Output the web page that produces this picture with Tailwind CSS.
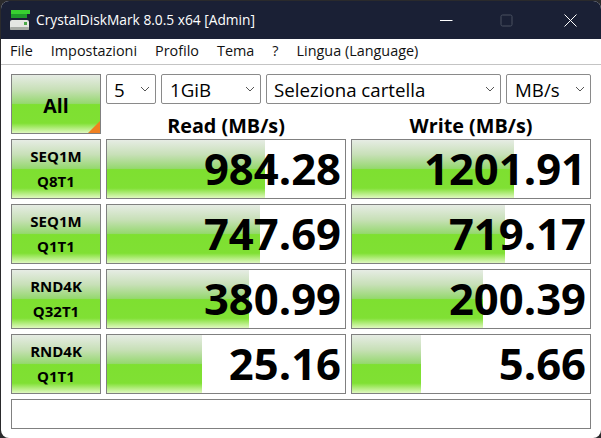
<!DOCTYPE html>
<html lang="it">
<head>
  <meta charset="UTF-8">
  <title>CrystalDiskMark 8.0.5 x64 [Admin]</title>
  <script src="https://cdn.jsdelivr.net/npm/@tailwindcss/browser@4"></script>
</head>
<body class="w-[601px] h-[438px] overflow-hidden bg-[#2a2a2c] font-['Open_Sans','Noto_Sans',sans-serif] text-black">
  <div class="w-[600px] h-[437px] mt-[1px] ml-[1px] rounded-[8px] overflow-hidden bg-white flex flex-col">

    <!-- title bar -->
    <div class="h-[38px] shrink-0 bg-[#1a2035] flex items-center text-white">
      <svg class="ml-[9px] w-[20px] h-[20px]" viewBox="0 0 20 20">
        <rect x="1" y="0" width="19" height="4" fill="#38d030"/>
        <rect x="1" y="4" width="16" height="4" fill="#1f9a2a"/>
        <rect x="0" y="10" width="19" height="10" rx="2" fill="#e4e6e2"/>
        <rect x="0" y="17" width="19" height="3" rx="1" fill="#a6aaa4"/>
        <rect x="14" y="12" width="3" height="3" fill="#4aa848"/>
      </svg>
      <span class="ml-[6px] text-[13.75px] leading-none whitespace-nowrap">CrystalDiskMark 8.0.5 x64 [Admin]</span>
      <svg class="ml-auto mr-[47px] w-[13px] h-[13px]" viewBox="0 0 13 13"><path d="M0 6.5h12.5" stroke="#fff" stroke-width="1"/></svg>
      <svg class="mr-[51px] w-[13px] h-[13px]" viewBox="0 0 13 13"><rect x="1" y="1" width="11" height="11" rx="1.5" fill="none" stroke="#4a5060" stroke-width="1"/></svg>
      <svg class="mr-[24px] w-[13px] h-[13px]" viewBox="0 0 13 13"><path d="M.5.5l12 12M12.5.5l-12 12" stroke="#fff" stroke-width="1"/></svg>
    </div>

    <!-- menu bar -->
    <div class="h-[26px] shrink-0 flex items-center pl-[9px] gap-[18px] text-[14.4px] leading-none border-b border-[#c4c4c4] text-[#111]">
      <span>File</span><span>Impostazioni</span><span>Profilo</span><span>Tema</span><span>?</span><span>Lingua (Language)</span>
    </div>

    <!-- main grid -->
    <div class="pl-[10px] pt-[9px] grid grid-cols-[90px_240px_240px] gap-[5px]">
      <div class="relative h-[60px] border border-[#808080] bg-[linear-gradient(#e6ece4_0%,#c8e0b8_25%,#96d870_49%,#7ee030_51%,#80e034_83%,#e0f8c0_100%)] flex items-center justify-center font-bold text-[19.5px] pt-[3px]">
        All
        <span class="absolute right-0 bottom-0 w-0 h-0 border-l-[12px] border-l-transparent border-b-[12px] border-b-[#f08020]"></span>
      </div>
      <div class="col-span-2 h-[60px] flex flex-col">
        <div class="flex gap-[5px] h-[30px] text-[18.7px]">
          <div class="w-[50px] rounded-[2px] border border-[#8a8a8a] flex items-center pl-[7px] pt-[3px]">5<svg class="ml-auto mr-[5px] mb-[3px] w-[10px] h-[6px]" viewBox="0 0 10 6"><path d="M1 1l4 4 4-4" fill="none" stroke="#555"/></svg></div>
          <div class="w-[100px] rounded-[2px] border border-[#8a8a8a] flex items-center pl-[8px] pt-[3px]">1GiB<svg class="ml-auto mr-[5px] mb-[3px] w-[10px] h-[6px]" viewBox="0 0 10 6"><path d="M1 1l4 4 4-4" fill="none" stroke="#555"/></svg></div>
          <div class="w-[235px] rounded-[2px] border border-[#8a8a8a] flex items-center pl-[7px] pt-[3px]">Seleziona cartella<svg class="ml-auto mr-[5px] mb-[3px] w-[10px] h-[6px]" viewBox="0 0 10 6"><path d="M1 1l4 4 4-4" fill="none" stroke="#555"/></svg></div>
          <div class="w-[85px] rounded-[2px] border border-[#8a8a8a] flex items-center pl-[8px] pt-[3px]">MB/s<svg class="ml-auto mr-[5px] mb-[3px] w-[10px] h-[6px]" viewBox="0 0 10 6"><path d="M1 1l4 4 4-4" fill="none" stroke="#555"/></svg></div>
        </div>
        <div class="flex gap-[5px] h-[30px] items-center font-bold text-[19.8px] leading-none pt-[13px]">
          <div class="w-[240px] text-center">Read (MB/s)</div>
          <div class="w-[240px] text-center">Write (MB/s)</div>
        </div>
      </div>

      <!-- SEQ1M Q8T1 -->
      <div class="h-[60px] border border-[#808080] bg-[linear-gradient(#e6ece4_0%,#c8e0b8_25%,#96d870_49%,#7ee030_51%,#80e034_83%,#e0f8c0_100%)] flex flex-col items-center justify-center font-bold text-[15px] leading-[25px]"><span>SEQ1M</span><span>Q8T1</span></div>
      <div class="relative h-[60px] border border-[#808080] flex items-center justify-end pr-[4px] font-bold text-[43.6px]"><span class="absolute left-0 inset-y-0 w-[158px] bg-[linear-gradient(#e6ece4_0%,#c8e0b8_25%,#96d870_49%,#7ee030_51%,#80e034_83%,#e0f8c0_100%)]"></span><span class="relative">984.28</span></div>
      <div class="relative h-[60px] border border-[#808080] flex items-center justify-end pr-[4px] font-bold text-[43.6px]"><span class="absolute left-0 inset-y-0 w-[162px] bg-[linear-gradient(#e6ece4_0%,#c8e0b8_25%,#96d870_49%,#7ee030_51%,#80e034_83%,#e0f8c0_100%)]"></span><span class="relative">1201.91</span></div>

      <!-- SEQ1M Q1T1 -->
      <div class="h-[60px] border border-[#808080] bg-[linear-gradient(#e6ece4_0%,#c8e0b8_25%,#96d870_49%,#7ee030_51%,#80e034_83%,#e0f8c0_100%)] flex flex-col items-center justify-center font-bold text-[15px] leading-[25px]"><span>SEQ1M</span><span>Q1T1</span></div>
      <div class="relative h-[60px] border border-[#808080] flex items-center justify-end pr-[4px] font-bold text-[43.6px]"><span class="absolute left-0 inset-y-0 w-[153px] bg-[linear-gradient(#e6ece4_0%,#c8e0b8_25%,#96d870_49%,#7ee030_51%,#80e034_83%,#e0f8c0_100%)]"></span><span class="relative">747.69</span></div>
      <div class="relative h-[60px] border border-[#808080] flex items-center justify-end pr-[4px] font-bold text-[43.6px]"><span class="absolute left-0 inset-y-0 w-[153px] bg-[linear-gradient(#e6ece4_0%,#c8e0b8_25%,#96d870_49%,#7ee030_51%,#80e034_83%,#e0f8c0_100%)]"></span><span class="relative">719.17</span></div>

      <!-- RND4K Q32T1 -->
      <div class="h-[60px] border border-[#808080] bg-[linear-gradient(#e6ece4_0%,#c8e0b8_25%,#96d870_49%,#7ee030_51%,#80e034_83%,#e0f8c0_100%)] flex flex-col items-center justify-center font-bold text-[15px] leading-[25px]"><span>RND4K</span><span>Q32T1</span></div>
      <div class="relative h-[60px] border border-[#808080] flex items-center justify-end pr-[4px] font-bold text-[43.6px]"><span class="absolute left-0 inset-y-0 w-[142px] bg-[linear-gradient(#e6ece4_0%,#c8e0b8_25%,#96d870_49%,#7ee030_51%,#80e034_83%,#e0f8c0_100%)]"></span><span class="relative">380.99</span></div>
      <div class="relative h-[60px] border border-[#808080] flex items-center justify-end pr-[4px] font-bold text-[43.6px]"><span class="absolute left-0 inset-y-0 w-[131px] bg-[linear-gradient(#e6ece4_0%,#c8e0b8_25%,#96d870_49%,#7ee030_51%,#80e034_83%,#e0f8c0_100%)]"></span><span class="relative">200.39</span></div>

      <!-- RND4K Q1T1 -->
      <div class="h-[60px] border border-[#808080] bg-[linear-gradient(#e6ece4_0%,#c8e0b8_25%,#96d870_49%,#7ee030_51%,#80e034_83%,#e0f8c0_100%)] flex flex-col items-center justify-center font-bold text-[15px] leading-[25px]"><span>RND4K</span><span>Q1T1</span></div>
      <div class="relative h-[60px] border border-[#808080] flex items-center justify-end pr-[4px] font-bold text-[43.6px]"><span class="absolute left-0 inset-y-0 w-[95px] bg-[linear-gradient(#e6ece4_0%,#c8e0b8_25%,#96d870_49%,#7ee030_51%,#80e034_83%,#e0f8c0_100%)]"></span><span class="relative">25.16</span></div>
      <div class="relative h-[60px] border border-[#808080] flex items-center justify-end pr-[4px] font-bold text-[43.6px]"><span class="absolute left-0 inset-y-0 w-[69px] bg-[linear-gradient(#e6ece4_0%,#c8e0b8_25%,#96d870_49%,#7ee030_51%,#80e034_83%,#e0f8c0_100%)]"></span><span class="relative">5.66</span></div>

      <!-- comment box -->
      <div class="col-span-3 h-[30px] border border-[#808080]"></div>
    </div>
  </div>
</body>
</html>
